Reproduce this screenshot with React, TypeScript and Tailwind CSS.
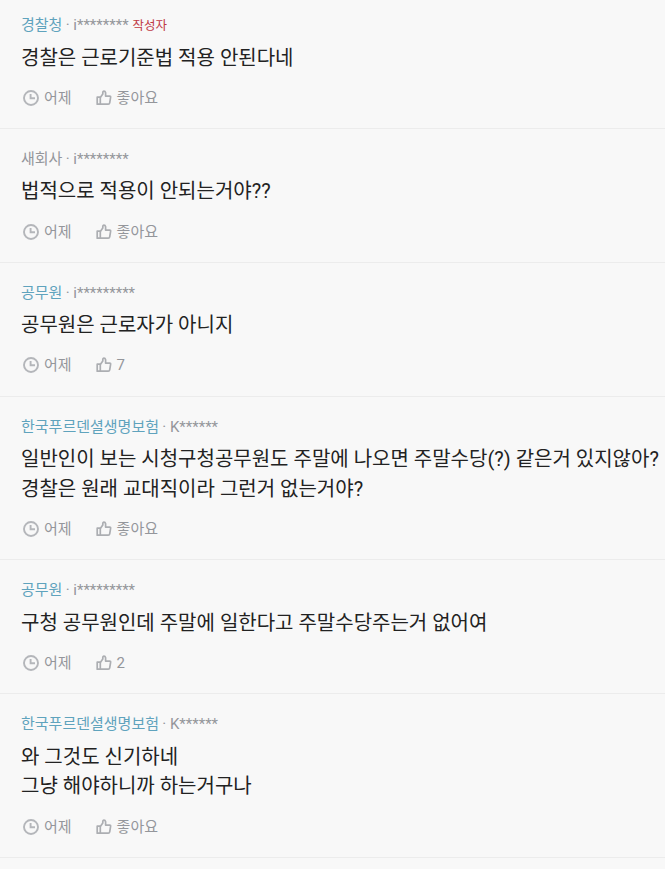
import React from 'react';

interface Comment {
  id: number;
  company: string;
  companyLinked: boolean;
  nickname: string;
  isWriter?: boolean;
  lines: string[];
  likes: string;
}

const comments: Comment[] = [
  { id: 1, company: '경찰청', companyLinked: true, nickname: 'i********', isWriter: true, lines: ['경찰은 근로기준법 적용 안된다네'], likes: '좋아요' },
  { id: 2, company: '새회사', companyLinked: false, nickname: 'i********', lines: ['법적으로 적용이 안되는거야??'], likes: '좋아요' },
  { id: 3, company: '공무원', companyLinked: true, nickname: 'i*********', lines: ['공무원은 근로자가 아니지'], likes: '7' },
  {
    id: 4,
    company: '한국푸르덴셜생명보험',
    companyLinked: true,
    nickname: 'K******',
    lines: ['일반인이 보는 시청구청공무원도 주말에 나오면 주말수당(?) 같은거 있지않아?', '경찰은 원래 교대직이라 그런거 없는거야?'],
    likes: '좋아요',
  },
  { id: 5, company: '공무원', companyLinked: true, nickname: 'i*********', lines: ['구청 공무원인데 주말에 일한다고 주말수당주는거 없어여'], likes: '2' },
  {
    id: 6,
    company: '한국푸르덴셜생명보험',
    companyLinked: true,
    nickname: 'K******',
    lines: ['와 그것도 신기하네', '그냥 해야하니까 하는거구나'],
    likes: '좋아요',
  },
];

const ClockIcon: React.FC = () => (
  <svg className="h-4 w-4 text-[#b4b6ba]" viewBox="0 0 16 16" fill="none" stroke="currentColor" strokeWidth="1.9">
    <circle cx="8" cy="8" r="7" />
    <path d="M7.6 4v4.3H12" />
  </svg>
);

const LikeIcon: React.FC = () => (
  <svg className="h-4 w-4 text-[#acaeb2]" viewBox="0 0 16 16" fill="none" stroke="currentColor" strokeWidth="1.7" strokeLinejoin="round">
    <path d="M1.2 7.2h3.1v7H1.2z" />
    <path d="M4.3 7.4 6.8 4V2.6Q6.8 1.2 8 1.2t1.6 1.6v3.3H13.6q1.2 0 1 1.2l-.9 5.5q-.2 1.4-1.5 1.4H4.3" />
  </svg>
);

const CommentItem: React.FC<{ comment: Comment }> = ({ comment }) => (
  <li className="border-b border-[#ececec] pt-[21px] pb-[20.3px] pl-[21px] first:pt-[16.35px]">
    <p className="flex h-[18px] items-center text-[15px] leading-[18px] whitespace-pre text-[#94969b]">
      <span className={comment.companyLinked ? 'text-[#5fa3bd]' : ''}>{comment.company}</span>
      <span className="-ml-[0.5px]"> · {comment.nickname}</span>
      {comment.isWriter && <span className="ml-1 pt-0.5 text-[12.5px] text-[#c03a45]">작성자</span>}
    </p>
    <div className="mt-[9.3px] text-[20px] leading-[29.9px] whitespace-nowrap text-[#222222]">
      {comment.lines.map((line) => (
        <p key={line}>{line}</p>
      ))}
    </div>
    <div className="mt-[14.3px] flex h-5 items-center text-[15px] leading-5 text-[#94969b]">
      <span className="ml-0.5 flex items-center gap-[5px]">
        <ClockIcon />
        어제
      </span>
      <span className="ml-6 flex items-center gap-[5px]">
        <LikeIcon />
        {comment.likes}
      </span>
    </div>
  </li>
);

const App: React.FC = () => (
  <main className="h-[869px] w-[665px] overflow-hidden bg-[#f8f8f8] font-[Roboto,'Noto_Sans_CJK_KR',sans-serif]">
    <ul>
      {comments.map((comment) => (
        <CommentItem key={comment.id} comment={comment} />
      ))}
    </ul>
  </main>
);

export default App;
